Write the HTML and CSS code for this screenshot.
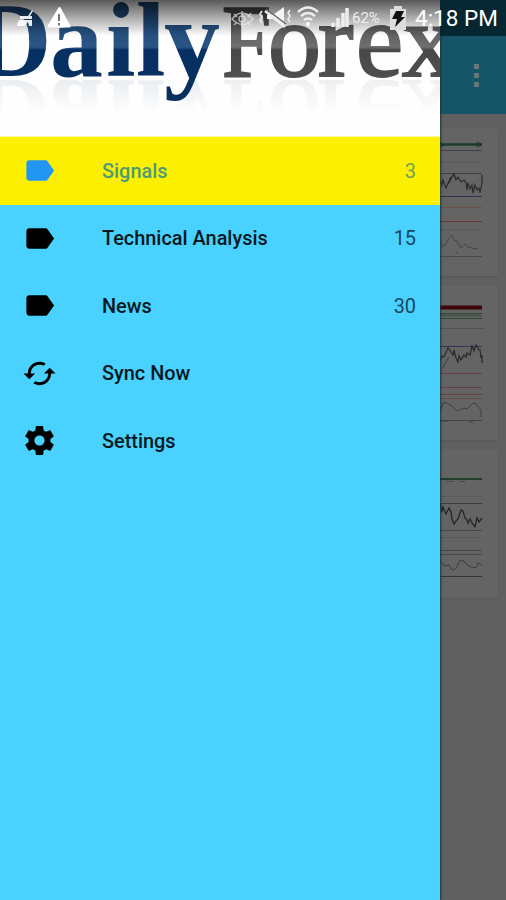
FILE: index.html
```html
<!DOCTYPE html>
<html lang="en">
<head>
    <meta charset="UTF-8">
    <meta name="viewport" content="width=device-width, initial-scale=1.0">
    <title>DailyForex</title>
    <link rel="stylesheet" href="styles.css">
</head>
<body>
    <div class="app">
        <!-- Drawer -->
        <nav class="drawer">
            <div class="logo">
                <svg width="440" height="136" viewBox="0 0 440 136">
                    <defs>
                        <linearGradient id="blue" gradientUnits="userSpaceOnUse" x1="0" y1="0" x2="0" y2="100">
                            <stop offset="0" stop-color="#173f6c"/>
                            <stop offset=".47" stop-color="#2a5685"/>
                            <stop offset=".5" stop-color="#063063"/>
                            <stop offset="1" stop-color="#0a2f5f"/>
                        </linearGradient>
                        <linearGradient id="gray" gradientUnits="userSpaceOnUse" x1="0" y1="0" x2="0" y2="100">
                            <stop offset="0" stop-color="#393939"/>
                            <stop offset=".47" stop-color="#707070"/>
                            <stop offset=".5" stop-color="#484848"/>
                            <stop offset="1" stop-color="#555555"/>
                        </linearGradient>
                        <linearGradient id="fade" gradientUnits="userSpaceOnUse" x1="0" y1="78" x2="0" y2="114">
                            <stop offset="0" stop-color="#fefefe" stop-opacity=".2"/>
                            <stop offset="1" stop-color="#fefefe"/>
                        </linearGradient>
                        <clipPath id="below"><rect y="80" width="440" height="56"/></clipPath>
                        <g id="word">
                            <text class="daily" x="-25 50 106 136" y="76">Dail</text>
                            <text class="daily tail" x="164" y="77">y</text>
                            <text class="forex cap" x="222" y="76" textLength="49" lengthAdjust="spacingAndGlyphs">F</text>
                            <text class="forex" x="268 318 356 402" y="76">orex</text>
                        </g>
                    </defs>
                    <g clip-path="url(#below)">
                        <g opacity=".1" transform="matrix(1 0 0 -1 0 156)" aria-hidden="true"><use href="#word"/></g>
                        <rect y="80" width="440" height="56" fill="url(#fade)"/>
                    </g>
                    <use href="#word"/>
                </svg>
            </div>
            <div class="item selected">
                <svg class="icon" viewBox="0 0 24 24"><path d="M17.63 5.84C17.27 5.33 16.67 5 16 5L5 5.01C3.9 5.01 3 5.9 3 7v10c0 1.1.9 1.99 2 1.99L16 19c.67 0 1.27-.33 1.63-.84L22 12z"/></svg>
                <span class="label">Signals</span>
                <span class="count">3</span>
            </div>
            <div class="item">
                <svg class="icon" viewBox="0 0 24 24"><path d="M17.63 5.84C17.27 5.33 16.67 5 16 5L5 5.01C3.9 5.01 3 5.9 3 7v10c0 1.1.9 1.99 2 1.99L16 19c.67 0 1.27-.33 1.63-.84L22 12z"/></svg>
                <span class="label">Technical Analysis</span>
                <span class="count">15</span>
            </div>
            <div class="item">
                <svg class="icon" viewBox="0 0 24 24"><path d="M17.63 5.84C17.27 5.33 16.67 5 16 5L5 5.01C3.9 5.01 3 5.9 3 7v10c0 1.1.9 1.99 2 1.99L16 19c.67 0 1.27-.33 1.63-.84L22 12z"/></svg>
                <span class="label">News</span>
                <span class="count">30</span>
            </div>
            <div class="item">
                <svg class="icon" viewBox="0 0 24 24"><path d="M19 8l-4 4h3c0 3.31-2.69 6-6 6-1.01 0-1.97-.25-2.8-.7l-1.46 1.46C8.97 19.54 10.43 20 12 20c4.42 0 8-3.58 8-8h3l-4-4zM6 12c0-3.31 2.69-6 6-6 1.01 0 1.97.25 2.8.7l1.46-1.46C15.03 4.46 13.57 4 12 4c-4.42 0-8 3.58-8 8H1l4 4 4-4H6z"/></svg>
                <span class="label">Sync Now</span>
            </div>
            <div class="item">
                <svg class="icon" viewBox="0 0 24 24"><path d="M19.43 12.98c.04-.32.07-.64.07-.98s-.03-.66-.07-.98l2.11-1.65c.19-.15.24-.42.12-.64l-2-3.46c-.12-.22-.39-.3-.61-.22l-2.49 1c-.52-.4-1.08-.73-1.69-.98l-.38-2.65C14.46 2.18 14.25 2 14 2h-4c-.25 0-.46.18-.49.42l-.38 2.65c-.61.25-1.17.59-1.69.98l-2.49-1c-.23-.09-.49 0-.61.22l-2 3.46c-.13.22-.07.49.12.64l2.11 1.65c-.04.32-.07.65-.07.98s.03.66.07.98l-2.11 1.65c-.19.15-.24.42-.12.64l2 3.46c.12.22.39.3.61.22l2.49-1c.52.4 1.08.73 1.69.98l.38 2.65c.03.24.24.42.49.42h4c.25 0 .46-.18.49-.42l.38-2.65c.61-.25 1.17-.59 1.69-.98l2.49 1c.23.09.49 0 .61-.22l2-3.46c.12-.22.07-.49-.12-.64l-2.11-1.65zM12 15.5c-1.93 0-3.5-1.57-3.5-3.5s1.57-3.5 3.5-3.5 3.5 1.57 3.5 3.5-1.57 3.5-3.5 3.5z"/></svg>
                <span class="label">Settings</span>
            </div>
        </nav>

        <!-- Dimmed page behind the drawer -->
        <main class="page">
            <div class="toolbar">
                <div class="more"><i></i><i></i><i></i></div>
            </div>
            <div class="cards">
                <div class="card">
                    <svg width="44" height="148" viewBox="440 128 44 148" fill="none">
                        <path d="M440 144.500H482" stroke="#1d3d2a" stroke-width="2.500"/>
                        <path d="M477 142l5 2.500-5 2.500M440 142l4 2.500-4 2.500" stroke="#1d3027"/>
                        <path d="M440 150.500H482M440 173.500H482" stroke="#3d403e"/>
                        <path d="M440 162.500H482M440 229.500H482" stroke="#565d55"/>
                        <path d="M440 196.500H482" stroke="#302f45"/>
                        <path d="M440 207.500H482" stroke="#69514a"/>
                        <path d="M440 221.500H482" stroke="#693434"/>
                        <path d="M440 256.500H482" stroke="#4a4a4a"/>
                        <path d="M440 181l2 4 1-5 3 8 5-11-3 7 6-10 2 6 2-3 3 5 3-2 2 3 1 7 1-7 2 6 2-4 1 8 2-8 2 5 2-2 1 5 2-10V175" stroke="#2b292b" stroke-width="1.200"/>
                        <path d="M440 241l2 6 3-2 4-7 3-3 2 5 3 1 4 7 4-4 3 3 4 1 6 1M456 252l2 2" stroke="#464646"/>
                    </svg>
                </div>
                <div class="card">
                    <svg width="44" height="155" viewBox="440 285 44 155" fill="none">
                        <path d="M440 307.500H482" stroke="#400508" stroke-width="4"/>
                        <path d="M440 313.500H482M440 318.500H482" stroke="#34483a"/>
                        <path d="M440 315.500H482" stroke="#475249" stroke-width="2"/>
                        <path d="M440 328.500H484" stroke="#515151"/>
                        <path d="M440 346.500H482" stroke="#333454"/>
                        <path d="M440 373.500H482M440 387.500H482M440 394.500H482" stroke="#693e3e"/>
                        <path d="M440 398.500H482" stroke="#6c4d4a"/>
                        <path d="M440 420.500H482" stroke="#424242"/>
                        <path d="M440 361l2-5 2 1 4-9 2 2 3 5 1-5 2 8 2 4 1-6 2 4 3-5 2 2 1-4 3 2 2-9 2 5 2-6 3 5 1 0 1 8 1-3v8" stroke="#292729" stroke-width="1.200"/>
                        <path d="M440 372l9-15M440 411l4-9 4 2 3 1 6 6 7-3 3 1 5-5 3-1 6 7v7M440 421h8M469 422h4" stroke="#3f3f3f"/>
                    </svg>
                </div>
                <div class="card">
                    <svg width="44" height="149" viewBox="440 449 44 149" fill="none">
                        <path d="M440 479H482" stroke="#233d2b" stroke-width="2"/>
                        <path d="M446 481.500h8M460 481.500h5" stroke="#3a4d3f"/>
                        <path d="M440 503.500H482" stroke="#3c3c3c"/>
                        <path d="M440 496.500H482M440 537.500H482" stroke="#565d55"/>
                        <path d="M440 530.500H482M440 550.500H482M440 554.500H482" stroke="#4c4747"/>
                        <path d="M440 576.500H482" stroke="#333333"/>
                        <path d="M440 504l2 8 1-5 3 7 3-6 2 4 1 7 2 5 2-3 2-2 3-9 2 1 2 7 2 2 1 3 2-4 2 4 3 4 2-9 2 4 3-4" stroke="#272527" stroke-width="1.300"/>
                        <path d="M440 560l4 6 5-1 2 4 3 1 3-3 3-7 4 1 3 4 4 2 5 1 2-5 4 2" stroke="#3e3e3e"/>
                    </svg>
                </div>
            </div>
        </main>

        <div class="statusbar">
            <svg class="notices" width="76" height="36" viewBox="0 0 76 36" fill="#ffffff">
                <path d="M20 16h8l4-6 1 1-3 5h2v3H20zM19 20h13v6h-3l-1-4-3 4h-8q0-3 2-6z" opacity=".9"/>
                <path d="M58.500 7.500q1-.8 2 0L70.500 26q.6 1.500-1 1.500H48.500q-1.500 0-1-1.500z"/>
                <path d="M59 14v7M59 23v2.500" stroke="#777777" stroke-width="2"/>
            </svg>
            <svg width="120" height="36" viewBox="230 0 120 36" fill="none" stroke="#eeeeee">
                <g opacity=".65" stroke-width="1.500">
                    <path d="M232 19q10-12 21 0q-10 11-21 0zM234 14l3 3M242 11v4M251 13l-3 4M234 25l3-3M242 27v-4M250 25l-3-3"/>
                    <circle cx="242" cy="19" r="3"/>
                </g>
                <path d="M262 11l-2 3 2 3-2 3 2 3M290 10l-2 3 2 3-2 3 2 3" stroke-width="1.600"/>
                <path d="M267 15h6l11-8v19l-11-7h-6z" fill="#f4f4f4" stroke="none"/>
                <path d="M266 9l20 15" stroke="#666666" stroke-width="1.500"/>
                <path d="M265 11l20 16" stroke-width="2.500"/>
                <path d="M298 12q10-9 20 0M301 16q7-6 14 0M304 20q4-3 8 0" stroke-width="2.500"/>
                <circle cx="308" cy="24" r="2" fill="#ffffff" stroke="none"/>
                <path d="M333 27v-4M338 27v-9M343 27V13M347 27V8" stroke-width="3.500"/>
            </svg>
            <span class="percent">62%</span>
            <svg class="battery" width="16" height="24" viewBox="0 0 16 24">
                <path d="M4 0h8v3h4v21H0V3h4z" fill="#dddddd"/>
                <path d="M6 5h8l-3 6h4L5 21l2-8H2z" fill="#111111"/>
            </svg>
            <span class="clock">4:18 PM</span>
        </div>
    </div>
</body>
</html>
```

FILE: styles.css
```css
body {
    margin: 0;
    background-color: #606060;
    font-family: Roboto, sans-serif;
}

.app {
    display: flex;
    position: relative;
    width: 506px;
    height: 900px;
    overflow: hidden;
}

.drawer {
    width: 440px;
    flex: none;
    background-color: #49d2ff;
    box-shadow: 1px 0 2px #1d3636;
    z-index: 1;
}

.logo {
    height: 136px;
    background-color: #fefefe;
    border-bottom: 1px solid #fff9a0;
    overflow: hidden;
}

.logo svg {
    display: block;
}

.daily,
.forex {
    font-family: "Liberation Serif", serif;
    font-size: 106px;
}

.daily {
    font-weight: bold;
    fill: url(#blue);
}

.tail {
    font-size: 112px;
}

.forex {
    fill: url(#gray);
    stroke: url(#gray);
    stroke-width: 2.2px;
}

.cap {
    font-size: 103px;
}

.item {
    display: flex;
    align-items: center;
    box-sizing: border-box;
    height: 67.5px;
    padding: 0 24px 0 22px;
    color: #07181f;
    font-size: 19.9px;
}

.icon {
    width: 35px;
    height: 35px;
    margin-right: 45px;
    fill: #000000;
}

.label,
.count {
    padding-top: 1px;
}

.label {
    flex: 1;
    font-weight: 500;
}

.count {
    color: #17475b;
}

.selected {
    background-color: #fcf000;
    color: #4d9b75;
}

.selected .icon {
    fill: #2196f3;
}

.selected .count {
    color: #6ea354;
}

.page {
    flex: 1;
    background-color: #606060;
}

.toolbar {
    display: flex;
    align-items: center;
    justify-content: center;
    box-sizing: border-box;
    height: 114px;
    padding: 36px 0 0 6px;
    background-color: #165467;
}

.more {
    display: flex;
    flex-direction: column;
    gap: 4px;
}

.more i {
    width: 5px;
    height: 5px;
    background-color: #65777c;
}

.cards {
    display: flex;
    flex-direction: column;
    gap: 9px;
    padding: 14px 8px 0 0;
}

.card {
    background-color: #646464;
    box-shadow: 0 1px 2px #575757;
}

.card svg {
    display: block;
}

.statusbar {
    display: flex;
    align-items: center;
    position: absolute;
    top: 0;
    left: 0;
    width: 506px;
    height: 36px;
    color: #ffffff;
    background: linear-gradient(rgba(0, 0, 0, 0.65), rgba(0, 0, 0, 0.35) 45%, rgba(0, 0, 0, 0)) 0 0 / 440px 36px no-repeat, linear-gradient(#062631, #062631) 440px 0 / 66px 36px no-repeat;
    z-index: 2;
}

.notices {
    margin-right: 154px;
}

.percent {
    width: 32px;
    margin-left: 2px;
    font-size: 15px;
    color: #eeeeee;
}

.battery {
    margin: 0 9px 0 6px;
}

.clock {
    font-size: 22.5px;
    white-space: nowrap;
}
```
